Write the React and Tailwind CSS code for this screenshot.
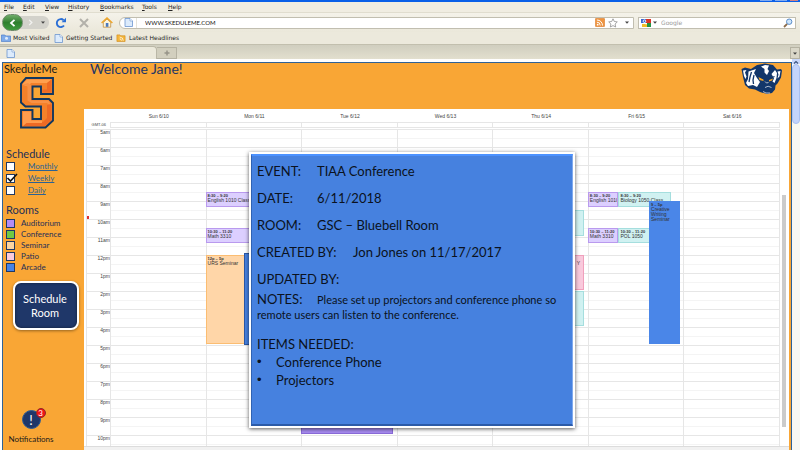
import React from "react";

const DAYS = ["Sun 6/10", "Mon 6/11", "Tue 6/12", "Wed 6/13", "Thu 6/14", "Fri 6/15", "Sat 6/16"];
const HOURS = [
  "5am", "6am", "7am", "8am", "9am", "10am", "11am", "12pm", "1pm",
  "2pm", "3pm", "4pm", "5pm", "6pm", "7pm", "8pm", "9pm", "10pm",
];
const FIRST_HOUR = 5;
const HOUR_HEIGHT = 18;

const TONES = {
  purple: "bg-[#dccfff] border-[#b99aee]",
  violet: "bg-[#a78bf0] border-[#8a6ad8]",
  teal: "bg-[#d0f1f1] border-[#a5dede]",
  orange: "bg-[#ffd6a8] border-[#fbbd72]",
  pink: "bg-[#f9c9dc] border-[#f0a0bc]",
  blue: "bg-[#4a86e8] border-[#4a86e8]",
  blueDark: "bg-[#4681e0] border-[#2b57a5]",
};

// left and width are shares of one day column
const EVENTS = [
  { day: 1, start: 8.5, end: 9.33, left: 0, width: 0.96, tone: "purple", time: "8:30 – 9:20", title: "English 1010 Class" },
  { day: 1, start: 10.5, end: 11.33, left: 0, width: 0.96, tone: "purple", time: "10:30 – 11:20", title: "Math 3310" },
  { day: 1, start: 12, end: 16.95, left: 0, width: 0.42, tone: "orange", time: "12p – 5p", title: "URS Seminar" },
  { day: 1, start: 11.9, end: 17, left: 0.4, width: 0.56, tone: "blueDark" },
  { day: 2, start: 19, end: 21.95, left: 0, width: 0.96, tone: "violet" },
  { day: 4, start: 9.5, end: 10.95, left: 0.5, width: 0.46, tone: "teal" },
  { day: 4, start: 12, end: 13.95, left: 0.5, width: 0.46, tone: "pink", title: "Y", alignEnd: true },
  { day: 4, start: 14, end: 15.95, left: 0.5, width: 0.46, tone: "teal" },
  { day: 5, start: 8.5, end: 9.33, left: 0, width: 0.32, tone: "purple", time: "8:30 – 9:20", title: "English 1010" },
  { day: 5, start: 8.5, end: 9.33, left: 0.32, width: 0.55, tone: "teal", time: "8:30 – 9:20", title: "Biology 1050 Class" },
  { day: 5, start: 10.5, end: 11.33, left: 0, width: 0.32, tone: "purple", time: "10:30 – 11:20", title: "Math 3310" },
  { day: 5, start: 10.5, end: 11.33, left: 0.32, width: 0.33, tone: "teal", time: "10:30 – 11:20", title: "POL 1050" },
  { day: 5, start: 9, end: 16.95, left: 0.64, width: 0.32, tone: "blue", time: "9 – 5p", title: "Creative Writing Seminar", wrap: true },
];

const ROOMS = [
  ["Auditorium", "bg-[#b48cf5]"],
  ["Conference", "bg-[#6fc944]"],
  ["Seminar", "bg-[#fbd5a2]"],
  ["Patio", "bg-[#fbcbdc]"],
  ["Arcade", "bg-[#4583e6]"],
];

const MENUS = [
  ["File", "w-[19px]"], ["Edit", "w-[22px]"], ["View", "w-[23px]"], ["History", "w-8"],
  ["Bookmarks", "w-[42px]"], ["Tools", "w-[26px]"], ["Help", "w-5"],
];

function PageIcon() {
  return (
    <svg viewBox="0 0 9 9" className="size-[9px] shrink-0" aria-hidden="true">
      <path d="M1 .5h5L8.500 3v5.500H1z" fill="#dcebfc" stroke="#6c95cf" strokeWidth=".8" />
      <path d="M6 .5V3h2.500" fill="#fff" stroke="#6c95cf" strokeWidth=".6" />
    </svg>
  );
}

function FeedIcon() {
  return (
    <svg viewBox="0 0 10 9" className="h-[9px] w-[10px] shrink-0" aria-hidden="true">
      <rect x=".3" y=".3" width="9.400" height="8.400" rx="1" fill="#ee9440" stroke="#d2772a" strokeWidth=".5" />
      <circle cx="2.700" cy="6.700" r=".9" fill="#fff" />
      <path d="M1.900 4.200a3.200 3.200 0 0 1 3.300 3.300M1.900 2a5.500 5.500 0 0 1 5.600 5.500" fill="none" stroke="#fff" strokeWidth="1" />
    </svg>
  );
}

function Caret() {
  return (
    <svg viewBox="0 0 4 3" className="h-[3px] w-1 shrink-0" aria-hidden="true">
      <path d="M0 .5h4L2 2.800z" fill="#444" />
    </svg>
  );
}

function BrowserChrome() {
  return (
    <header className="shrink-0 bg-[#ece9dc] font-['DejaVu_Sans',sans-serif] text-[6px] leading-[8px] text-[#222]">
      <div className="flex h-[2px] justify-end gap-[3px] bg-[#0a5fe8] pr-[2px]">
        <span className="h-px w-3 bg-[#7fa9f0]" />
        <span className="h-px w-3 bg-[#7fa9f0]" />
        <span className="h-px w-2 bg-[#d08080]" />
      </div>
      <nav className="flex h-[11px] items-center border-b border-[#e0ddcf] bg-[#f0ede2] pl-1">
        {MENUS.map(([m, w]) => (
          <button key={m} type="button" className={`${w} text-left`}>
            <span className="underline">{m[0]}</span>{m.slice(1)}
          </button>
        ))}
      </nav>
      <div className="flex h-[19px] items-center bg-gradient-to-b from-[#f4f2ea] to-[#ebe8da] pr-1">
        <div className="ml-[2px] flex w-[47px] items-center">
          <button type="button" aria-label="Back" className="z-10 flex h-[17px] w-[21px] shrink-0 items-center justify-center rounded-full border border-[#6d8a6a] bg-gradient-to-b from-[#6fae69] via-[#2f7f2e] to-[#3e9a3c]">
            <svg viewBox="0 0 8 8" className="size-2"><path d="M5.500.8 2 4l3.500 3.200" fill="none" stroke="#fff" strokeWidth="1.800" /></svg>
          </button>
          <div className="-ml-1 flex h-[13px] flex-1 items-center justify-between rounded-r-md bg-[#d3d2cb] pr-1 pl-2">
            <button type="button" aria-label="Forward">
              <svg viewBox="0 0 7 8" className="h-[7px] w-[7px]"><path d="M2 1l3 3-3 3" fill="none" stroke="#f2f2f0" strokeWidth="1.600" /></svg>
            </button>
            <Caret />
          </div>
        </div>
        <button type="button" aria-label="Reload" className="ml-[6px]">
          <svg viewBox="0 0 12 12" className="size-3">
            <path d="M9 8.500A4 4 0 1 1 8.600 3.200" fill="none" stroke="#2b6fd6" strokeWidth="1.900" />
            <path d="M6.600 5.200h4.400V.8z" fill="#2b6fd6" />
          </svg>
        </button>
        <button type="button" aria-label="Stop" className="ml-3">
          <svg viewBox="0 0 10 10" className="size-[10px]"><path d="M1 1l8 8M9 1L1 9" stroke="#b3b1aa" strokeWidth="2" /></svg>
        </button>
        <button type="button" aria-label="Home" className="ml-3">
          <svg viewBox="0 0 12 11" className="h-[11px] w-3">
            <path d="M2.300 5.500v4.700h7.400V5.500L6 2z" fill="#fdf5dc" stroke="#b9832f" strokeWidth=".7" />
            <path d="M.6 6L6 1l5.400 5" fill="none" stroke="#eea62c" strokeWidth="1.500" />
            <rect x="4.800" y="6" width="2.600" height="3.800" fill="#4b79bd" />
          </svg>
        </button>
        <div className="ml-[6px] flex h-3 flex-1 items-center gap-[3px] rounded-l-md border border-[#c1beb0] bg-white pr-1 pl-1">
          <PageIcon />
          <input
            aria-label="Address"
            defaultValue="WWW.SKEDULEME.COM"
            className="h-[10px] min-w-0 flex-1 border-l border-[#e5e3da] pl-2 font-['Lato',sans-serif] text-[6px] leading-[10px] text-[#111] outline-none"
          />
          <FeedIcon />
          <svg viewBox="0 0 10 10" className="size-[10px] shrink-0" aria-hidden="true">
            <path d="M5 .8l1.300 2.700 3 .4-2.200 2.100.6 3L5 7.600 2.300 9l.6-3L.7 3.900l3-.4z" fill="#fff" stroke="#8f8f8f" strokeWidth=".8" />
          </svg>
          <span className="pl-1"><Caret /></span>
        </div>
        <div className="ml-1 flex h-3 w-[158px] items-center gap-[2px] border border-[#c1beb0] bg-white px-[2px]">
          <svg viewBox="0 0 10 10" className="size-[10px] shrink-0" aria-hidden="true">
            <path d="M0 1h5v4H0z" fill="#3b67d0" />
            <path d="M5 1h5v4H5z" fill="#da3327" />
            <path d="M6 5h4v4H6z" fill="#259243" />
            <path d="M1 6h5v3H1z" fill="#f1bd28" />
            <circle cx="3.500" cy="3.200" r="1.300" fill="none" stroke="#fff" strokeWidth=".9" />
            <path d="M3.500 5.200l2 1" stroke="#fff" strokeWidth=".9" />
          </svg>
          <Caret />
          <input aria-label="Search" placeholder="Google" className="h-[10px] min-w-0 flex-1 pl-[2px] leading-[10px] outline-none placeholder:text-[#9b9b9b]" />
          <svg viewBox="0 0 10 10" className="size-[10px] shrink-0" aria-hidden="true">
            <path d="M1 9l3.200-3.200" stroke="#8a6b4a" strokeWidth="1.800" />
            <circle cx="6.200" cy="3.700" r="2.700" fill="#cfe6fb" stroke="#5c8ec9" strokeWidth="1" />
          </svg>
        </div>
      </div>
      <div className="flex h-3 items-center pl-[1px]">
        <button type="button" className="flex w-[53px] items-center gap-[2px] whitespace-nowrap">
          <svg viewBox="0 0 10 8" className="h-2 w-[10px] shrink-0" aria-hidden="true">
            <path d="M.4 1h3.400l1 1h4.800v5.600H.4z" fill="#7fabea" stroke="#4b7cc8" strokeWidth=".7" />
            <circle cx="5.500" cy="4.300" r="1.500" fill="#dfecfc" />
          </svg>
          Most Visited
        </button>
        <button type="button" className="flex w-[62px] items-center gap-[3px] whitespace-nowrap"><PageIcon />Getting Started</button>
        <button type="button" className="flex items-center gap-[3px] whitespace-nowrap">
          <svg viewBox="0 0 10 9" className="h-2 w-[10px] shrink-0" aria-hidden="true">
            <path d="M.4 1h3.400l1 1h4.800v6.400H.4z" fill="#f4b63c" stroke="#d08a1d" strokeWidth=".7" />
            <path d="M3.500 3.500a4 4 0 0 1 4 4M3.500 5.500a2 2 0 0 1 2 2" fill="none" stroke="#fff" strokeWidth=".8" />
          </svg>
          Latest Headlines
        </button>
      </div>
      <div className="flex h-[15px] items-end border-t border-[#c2bfae] bg-gradient-to-b from-[#d0cebf] to-[#e2dfce]">
        <div className="flex h-[13px] w-[157px] items-center rounded-tr-sm border-t border-r border-[#bab7a6] bg-[#ece9db] pl-[6px]"><PageIcon /></div>
        <button type="button" aria-label="New tab" className="flex h-3 w-5 items-center justify-center border-t border-r border-b border-[#b5b2a2] bg-[#d2cfbe]">
          <svg viewBox="0 0 6 6" className="size-[6px]"><path d="M3 .5v5M.5 3h5" stroke="#969488" strokeWidth="1.500" /></svg>
        </button>
        <button type="button" aria-label="List tabs" className="ml-auto flex h-3 w-[10px] items-center justify-center border border-[#b5b2a2] bg-[#dad7c8]"><Caret /></button>
      </div>
    </header>
  );
}

function SLogo() {
  return (
    <svg viewBox="0 0 34 52" className="h-[52px] w-[34px]" role="img" aria-label="S logo">
      <path
        d="M6 1h27v16H21V9.500h-8.500V22H29l4 4v17.500l-7.500 7H1V33h11.500v9H21V29.500H5.500L1 25.500V6.500z"
        fill="#f5812a" stroke="#12375f" strokeWidth="1.900"
      />
      <path d="M7 2.500h24.500L27 6H11L8 9.500 3 8V6.500z" fill="#ffa04e" />
      <path d="M2.500 7.500 7.500 9v14.500l4 2.500h15.500l1 1L31 28l-2.500-4.500H11V8L8 6z" fill="#f79146" />
      <path d="M27 6l4.500-3.500v13H22.500v-3H27zM27 28l4.500-1v16L25 49H2.500l4-4H23l4-4z" fill="#ee6a24" />
      <path d="M3 34.500h8v9h11v2.500H6.500L3 49z" fill="#ff9c4d" />
    </svg>
  );
}

function BadgerLogo() {
  return (
    <svg viewBox="0 0 42 33" className="h-[33px] w-[42px]" role="img" aria-label="Badger mascot">
      <path d="M.5 6 4 4.500l6 1.500 6-4 8-1.500 8 1.500 4 4.500 4-.5 1 1.500-1 7-3.500 6-2 2-.5 4-3 3.500-5 1-7-2-5-2.500-6-1-4-3.500-2-8z" fill="#12366a" />
      <path d="M2 7.500 5.500 7 4 9.500l1.500 4-1 2.500L3 13zM39.500 8l-3 .5 1 3-1 4 2-2z" fill="#fff" />
      <path d="M7.500 8.500 15 6l-2 4 3 5 3 4-3 5-4-2-5 1-2-3 2-4z" fill="#fff" />
      <path d="M10.500 9l-1.500 5-1 5M13 12l-1 5 .5 4" fill="none" stroke="#12366a" strokeWidth="1.300" />
      <path d="M20 3.500l4-1.500 4 .5-1.500 3.500L28 8l-2 4-2.500-2.500 0-3.500z" fill="#fff" />
      <path d="M30.500 11l3.500-4 2 3-.5 5-2 5-2-1.500 1.500-3z" fill="#fff" />
      <path d="M17.500 14l5 2.500v1.500l-4-1zM32 15.500l-4 1.500v1.500l3-1z" fill="#f6a828" />
      <path d="M15.500 12l8 4M33.500 13.500l-6 2.500" stroke="#12366a" strokeWidth="1.300" />
      <path d="M24 18.500l1.500 1.500 2-.5M24 24.500q3-2.500 6.500 0M22 28.500l3 1.500h4" fill="none" stroke="#d5dce6" strokeWidth=".8" />
    </svg>
  );
}

function Sidebar() {
  return (
    <aside className="flex w-[81px] shrink-0 flex-col text-[#1f2f57]">
      <div className="pl-px text-[11px] leading-[12px] text-[#1a1a1a]">SkeduleMe</div>
      <div className="flex pt-[2px] pl-[17px]"><SLogo /></div>
      <h2 className="mt-[18px] pl-[3px] text-[11px] leading-[14px]">Schedule</h2>
      <div className="flex flex-col gap-[1px] pl-[3px] text-[8px] leading-[11px]">
        {["Monthly", "Weekly", "Daily"].map((v) => (
          <div key={v} className="flex h-[11px] items-center gap-[13px]">
            <span className="relative flex">
              <input id={v} type="checkbox" defaultChecked={v === "Weekly"} aria-label={v} className="peer size-[9px] appearance-none border border-[#1f3864] bg-white" />
              <svg viewBox="0 0 12 10" className="pointer-events-none absolute -top-px left-0 hidden h-[10px] w-3 peer-checked:block" aria-hidden="true">
                <path d="M1.500 5l3 3 6.500-7" fill="none" stroke="#111" strokeWidth="1.600" />
              </svg>
            </span>
            <a href="#calendar" className="text-[#2c6293] underline">{v}</a>
          </div>
        ))}
      </div>
      <h2 className="mt-[7px] pl-[3px] text-[11px] leading-[14px]">Rooms</h2>
      <ul className="pt-px pl-[3px] text-[8px] leading-[11px]">
        {ROOMS.map(([name, color]) => (
          <li key={name} className="flex items-center gap-[6px]">
            <span className={`${color} size-[9px] border border-[#1f3864]`} />
            {name}
          </li>
        ))}
      </ul>
      <button type="button" className="mt-2 ml-[10px] h-[49px] w-[66px] rounded-lg border-2 border-white bg-[#1f3769] pr-[2px] text-[11px] leading-[14px] text-white shadow-[0_1px_3px_rgba(0,0,0,0.4),inset_0_0_3px_rgba(0,0,0,0.5)]">
        Schedule<br />Room
      </button>
      <button type="button" className="mt-20 flex w-14 flex-col items-center text-[8px] leading-[10px] text-[#1a1a1a]">
        <span className="relative flex size-[19px] items-center justify-center rounded-full border border-[#2c5a94] bg-[#1f3769] text-[13px] text-white">
          !
          <span className="absolute -top-[3px] -right-[6px] flex size-[10px] items-center justify-center rounded-full border border-[#8e2a2a] bg-[#f11414] text-[8px] leading-[8px]">3</span>
        </span>
        <span className="mt-[5px]">Notifications</span>
      </button>
    </aside>
  );
}

function CalendarEvent({ event }) {
  const dayShare = 100 / DAYS.length;
  const box = {
    left: `${(event.day + event.left) * dayShare}%`,
    width: `${event.width * dayShare}%`,
    top: `${(event.start - FIRST_HOUR) * HOUR_HEIGHT}px`,
    height: `${(event.end - event.start) * HOUR_HEIGHT}px`,
  };
  return (
    <div style={box} className={`absolute overflow-hidden border pl-px text-[5px] leading-[5px] text-[#333] ${TONES[event.tone]} ${event.wrap ? "" : "whitespace-nowrap"} ${event.alignEnd ? "pt-[5px] pr-[3px] text-right" : ""}`}>
      {event.time && <div className="text-[4px] font-bold">{event.time}</div>}
      {event.title && <div>{event.title}</div>}
    </div>
  );
}

function Calendar() {
  return (
    <section id="calendar" className="mr-[2px] flex min-h-0 flex-1 flex-col bg-white font-['Liberation_Sans',sans-serif] text-[5px] leading-[6px] text-[#444]">
      <div className="mr-[9px] ml-[27px] flex h-[13px] items-center pt-px">
        {DAYS.map((d) => <div key={d} className="flex-1 text-center">{d}</div>)}
      </div>
      <div className="mr-[9px] flex h-[6px] shrink-0">
        <div className="w-[26px] pr-1 text-right text-[4px]">GMT-06</div>
        <div className="flex flex-1 border-y border-r border-[#e6e6e6]">
          {DAYS.map((d) => <div key={d} className="flex-1 border-l border-[#e6e6e6]" />)}
        </div>
      </div>
      <div className="mt-px flex min-h-0 flex-1">
        <div className="relative ml-[2px] min-w-0 flex-1 overflow-hidden border-l border-[#e6e6e6]">
          {HOURS.map((h) => (
            <div key={h} className="flex h-[18px] border-t border-[#e6e6e6]">
              <div className="w-[23px] text-right leading-[5px]">{h}</div>
              <div className="flex-1"><div className="h-[9px] border-b border-[#f4f4f4]" /></div>
            </div>
          ))}
          <div className="absolute inset-y-0 right-0 left-[23px] flex border-r border-[#e6e6e6]">
            {DAYS.map((d) => <div key={d} className="flex-1 border-l border-[#e6e6e6]" />)}
            {EVENTS.map((e, i) => <CalendarEvent key={i} event={e} />)}
          </div>
          <span className="absolute top-[87px] left-0 h-[3px] w-[2px] bg-[#e03030]" />
        </div>
        <div className="w-[9px] pt-[66px] pl-[2px]">
          <div className="h-[232px] w-1 bg-[#cbcbcb]" />
        </div>
      </div>
      <div className="h-1 shrink-0 border-t border-[#dcdcdc] bg-[#f1f1f1]" />
    </section>
  );
}

function Detail({ label, wide, children }) {
  return (
    <div className="flex h-[27px] items-center">
      <dt className={wide ? "w-24" : "w-[60px]"}>{label}</dt>
      <dd>{children}</dd>
    </div>
  );
}

function EventPopup() {
  return (
    <div role="dialog" aria-label="Event details" className="absolute top-[152px] left-[249px] h-[276px] w-[326px] border-2 border-white bg-white text-[13px] leading-[18px] text-[#0b1220] shadow-[0_1px_4px_rgba(0,0,0,0.65)]">
      <div className="h-[272px] border-t-2 border-r border-b-2 border-l border-t-[#4c92ff] border-r-[#7fa9ee] border-b-[#2c5ba8] border-l-[#2f62b2] bg-[#4681df] px-[5px] pt-px">
        <dl>
          <Detail label="EVENT:">TIAA Conference</Detail>
          <Detail label="DATE:">6/11/2018</Detail>
          <Detail label="ROOM:">GSC – Bluebell Room</Detail>
          <Detail label="CREATED BY:" wide>Jon Jones on 11/17/2017</Detail>
          <Detail label="UPDATED BY:" wide />
        </dl>
        <p className="text-[11px] leading-[15px]">
          <span className="inline-block w-[60px] text-[13px]">NOTES:</span>
          Please set up projectors and conference phone so remote users can listen to the conference.
        </p>
        <h3 className="mt-[13px]">ITEMS NEEDED:</h3>
        <ul>
          {["Conference Phone", "Projectors"].map((item) => (
            <li key={item} className="flex"><span className="w-[19px] font-['Liberation_Sans',sans-serif]">•</span>{item}</li>
          ))}
        </ul>
      </div>
    </div>
  );
}

export default function App() {
  return (
    <div className="relative flex h-screen flex-col overflow-hidden bg-white font-['Lato','Open_Sans',sans-serif]">
      <BrowserChrome />
      <div className="flex min-h-0 flex-1">
        <div className="mt-[3px] ml-[2px] flex min-w-0 flex-1 border-x border-t border-[#2f6296] bg-[#f9a635]">
          <Sidebar />
          <main className="flex min-w-0 flex-1 flex-col">
            <div className="flex h-[46px] shrink-0 justify-between pr-2 pl-[6px]">
              <h1 className="text-[14px] leading-[12px] text-[#243665]">Welcome Jane!</h1>
              <BadgerLogo />
            </div>
            <Calendar />
          </main>
        </div>
        <div className="w-2 shrink-0 bg-[#f8f8f2]">
          <div className="flex h-[5px] items-center justify-center bg-[#c9d8fb]">
            <svg viewBox="0 0 6 4" className="h-1 w-[6px]" aria-hidden="true"><path d="M1 3.500l2-2 2 2" fill="none" stroke="#3d547f" strokeWidth="1.200" /></svg>
          </div>
          <div className="h-[60px] rounded-sm border border-[#a9c0f2] bg-[#c3d4fc]" />
        </div>
      </div>
      <EventPopup />
    </div>
  );
}
